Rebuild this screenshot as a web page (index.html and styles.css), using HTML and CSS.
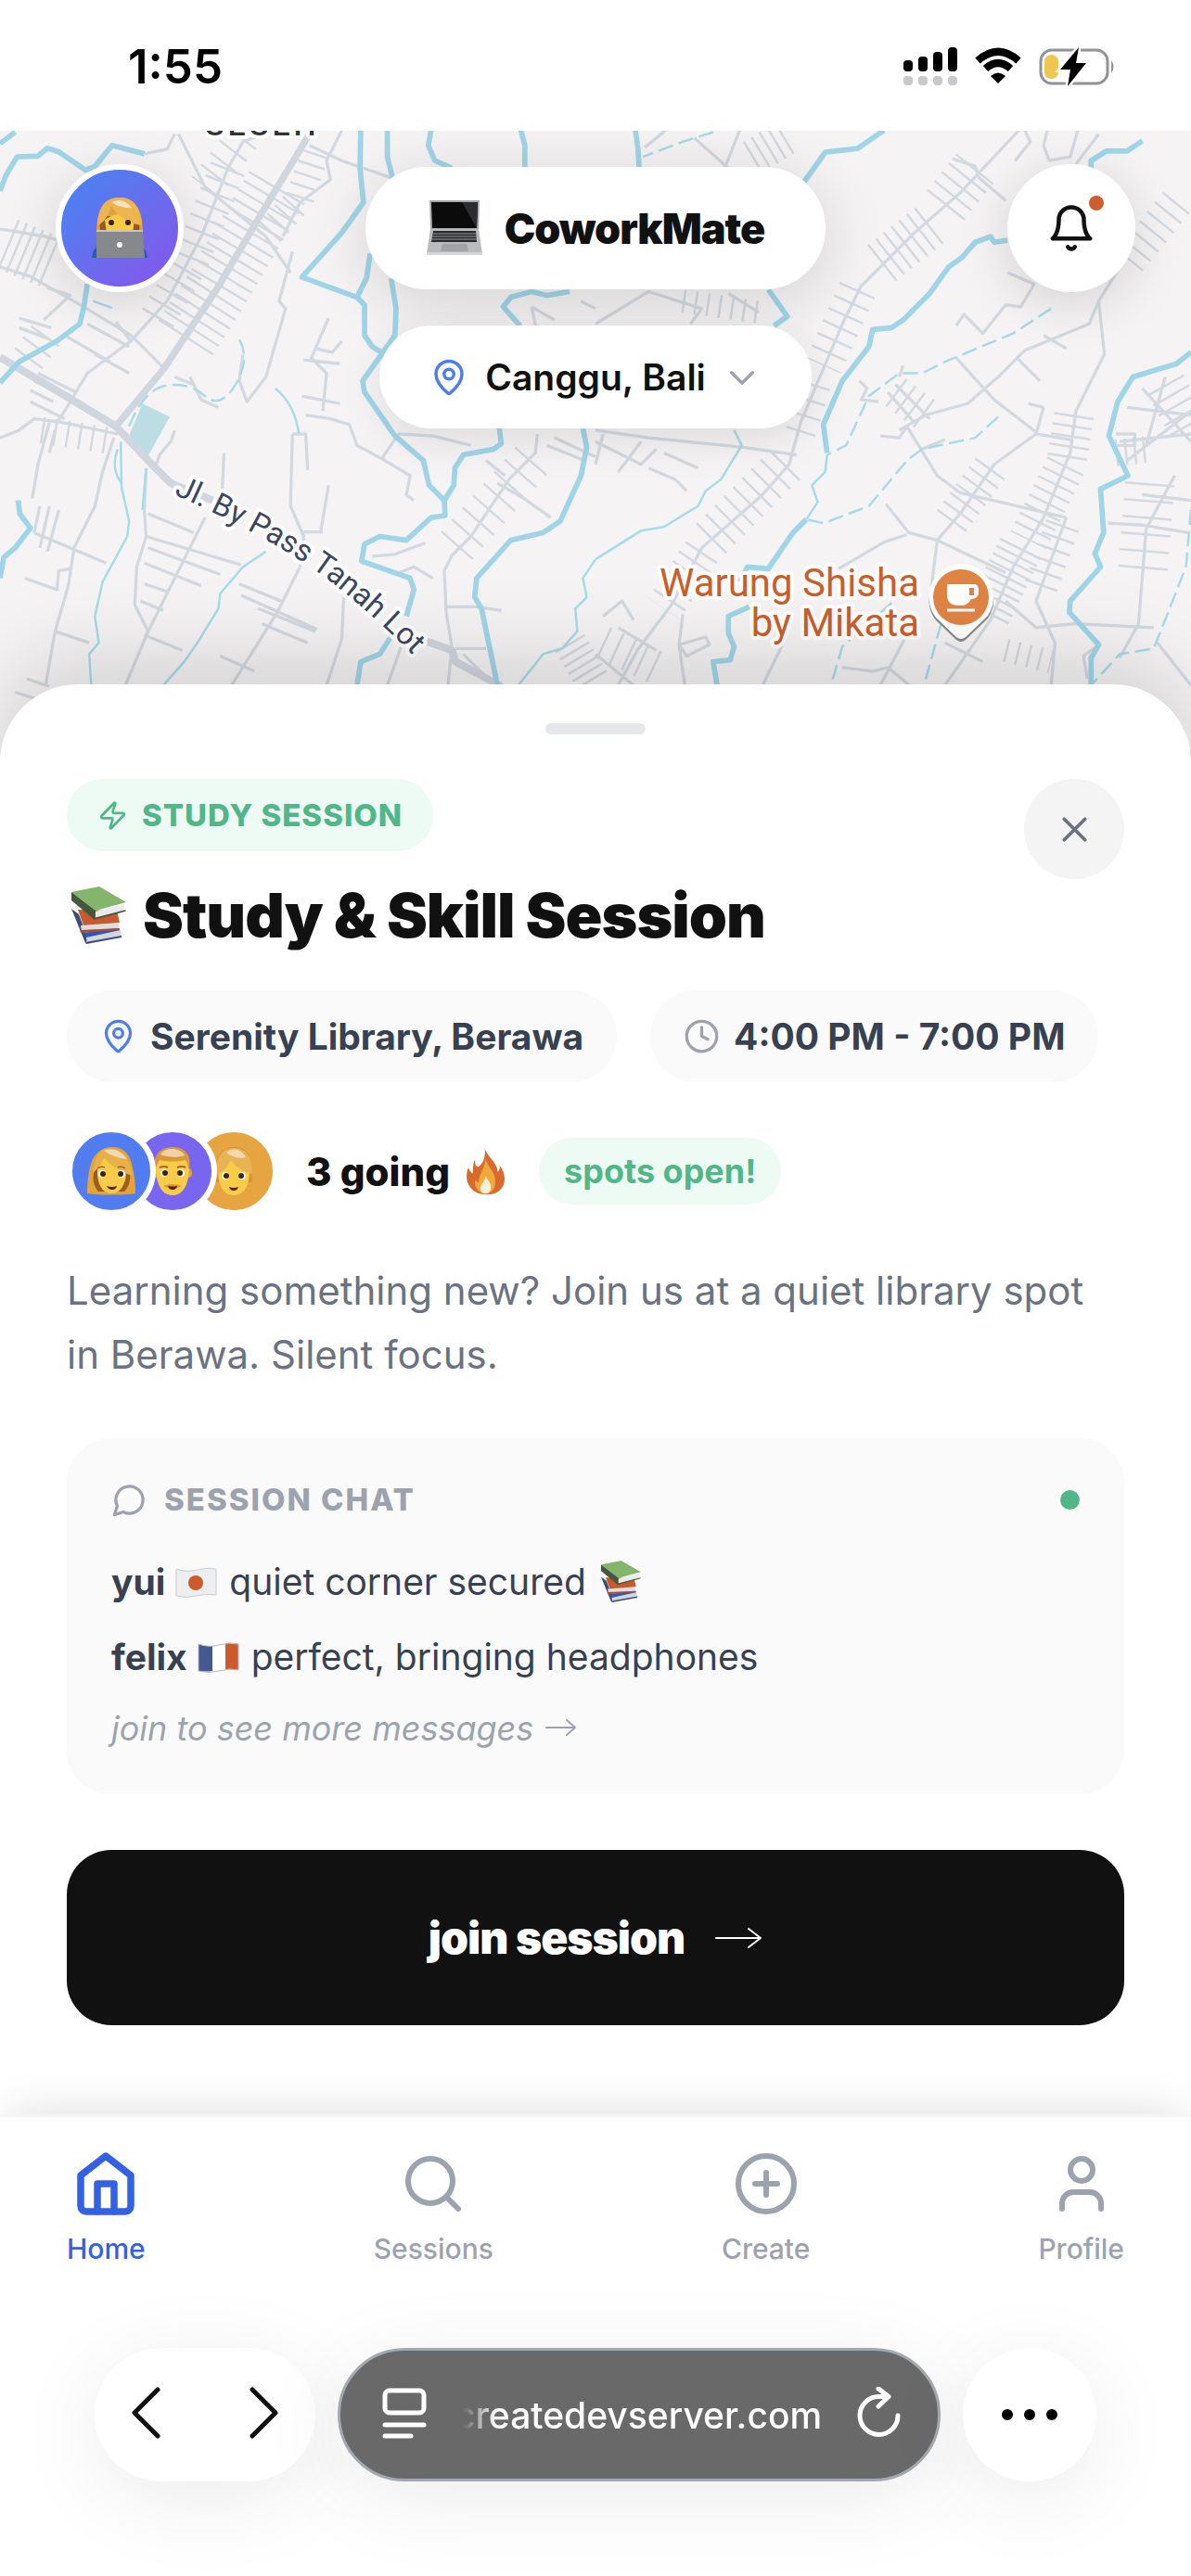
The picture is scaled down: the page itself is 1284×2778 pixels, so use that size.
FILE: index.html
```html
<!DOCTYPE html>
<html lang="en">
<head>
  <meta charset="UTF-8">
  <meta name="viewport" content="width=device-width, initial-scale=1.0">
  <title>CoworkMate</title>
  <link rel="stylesheet" href="styles.css">
</head>
<body>
  <!-- Shared pictures -->
  <svg class="defs" aria-hidden="true">
    <symbol id="pin" viewBox="0 0 24 24">
      <path d="M20 10c0 5-5.500 10.200-7.400 11.800a1 1 0 0 1-1.200 0C9.500 20.200 4 15 4 10a8 8 0 0 1 16 0"/>
      <circle cx="12" cy="10" r="3"/>
    </symbol>
    <symbol id="books" viewBox="0 0 60 62">
      <path d="M1 24l8 6 10 27-3 4z" fill="#3b5078"/>
      <path d="M14 50l36-6 4 4-35 8z" fill="#2f55c4"/>
      <path d="M17 55l37-8 1 7-37 8z" fill="#d3d6da"/>
      <path d="M16 60l39-7v2l-38 7z" fill="#3b5078"/>
      <path d="M8 25l42 1 3 13-38 6z" fill="#c75a2e"/>
      <path d="M11 42l41-3v6l-40 3z" fill="#dcdfe2"/>
      <path d="M10 47l43-2v2l-42 3z" fill="#b04d26"/>
      <path d="M1 6L31 0l29 17-33 9z" fill="#83b56a"/>
      <path d="M1 6l26 20-1 10L1 15z" fill="#44583f"/>
      <path d="M27 27l31-8v7l-31 8z" fill="#e9ebec"/>
      <path d="M25 34l35-9-1 2-34 9z" fill="#44583f"/>
    </symbol>
    <symbol id="woman" viewBox="0 0 52 52">
      <path d="M0 50C0 35 2 22 6 13 11 4 18 0 27 0c12 0 18 7 21 18 3 12 4 22 4 32-12 2-40 2-52 0z" fill="#e2a33a"/>
      <path d="M12 48C4 38 6 28 10 18h34c4 12 3 23-4 30z" fill="#9c5d20"/>
      <path d="M11 27c0-11 6-17 15-17s16 6 16 17c0 14-7 23-16 23S11 41 11 27z" fill="#f8cb48"/>
      <path d="M6 28C8 11 15 3 17 3c13-4 29 4 32 28C37 28 22 18 17 9c1 8-5 14-11 19z" fill="#e8b04a"/>
      <path d="M18 4c11-4 20 1 25 9C33 12 25 9 18 4z" fill="#f3d9b0"/>
      <circle cx="16" cy="29" r="4" fill="#fff"/><circle cx="37" cy="29" r="4" fill="#fff"/>
      <circle cx="17" cy="29" r="3" fill="#3b2413"/><circle cx="36" cy="29" r="3" fill="#3b2413"/>
      <path d="M11 23q4-3 8-1M33 22q4-2 8 1" fill="none" stroke="#a5672a" stroke-width="1.500"/>
      <path d="M21 42q6 2 11 0-1 4-5 4t-6-4z" fill="#5c1e12"/>
    </symbol>
    <symbol id="man" viewBox="0 0 44 52">
      <ellipse cx="4" cy="28" rx="3" ry="5" fill="#e3a233"/><ellipse cx="40" cy="28" rx="3" ry="5" fill="#e3a233"/>
      <path d="M4 20C4 8 12 4 22 4s18 4 18 16c0 20-6 32-18 32S4 40 4 20z" fill="#f8cb48"/>
      <path d="M3 24C0 8 10 0 22 0c13 0 21 8 18 24-2-4-2-8-4-10-8 2-20 2-28 0-2 3-3 6-5 10z" fill="#d9983c"/>
      <path d="M9 8C14 0 30 0 35 9 27 12 16 11 9 8z" fill="#f0d3a4"/>
      <circle cx="13" cy="28" r="4" fill="#fff"/><circle cx="31" cy="28" r="4" fill="#fff"/>
      <circle cx="14" cy="28" r="3" fill="#3b2413"/><circle cx="30" cy="28" r="3" fill="#3b2413"/>
      <path d="M8 22q5-2 9 0M27 22q5-2 9 0" fill="none" stroke="#a5672a" stroke-width="2"/>
      <path d="M12 42q10-4 20 0-10 5-20 0z" fill="#d9953a"/>
      <path d="M17 42q5 1 10 0-1 4-5 4t-5-4z" fill="#5c1e12"/>
    </symbol>
    <symbol id="person" viewBox="0 0 44 52">
      <ellipse cx="5" cy="30" rx="3" ry="5" fill="#e3a233"/><ellipse cx="39" cy="30" rx="3" ry="5" fill="#e3a233"/>
      <path d="M2 38C-2 14 8 0 22 0c15 0 23 12 19 38z" fill="#d3902f"/>
      <path d="M5 26C5 14 12 8 22 8s17 6 17 18c0 17-7 26-17 26S5 43 5 26z" fill="#f8cb48"/>
      <path d="M3 30C1 12 9 1 22 1c13 0 21 9 20 28-9-2-18-7-23-15-4 8-9 13-16 16z" fill="#e8b355"/>
      <path d="M14 6C20 0 31 2 35 11 27 13 19 10 14 6z" fill="#f3d9b0"/>
      <circle cx="13" cy="31" r="4" fill="#fff"/><circle cx="31" cy="31" r="4" fill="#fff"/>
      <circle cx="14" cy="31" r="3" fill="#3b2413"/><circle cx="30" cy="31" r="3" fill="#3b2413"/>
      <path d="M17 43q5 2 10 0-1 4-5 4t-5-4z" fill="#5c1e12"/>
    </symbol>
    <symbol id="laptop" viewBox="0 0 60 60">
      <path d="M3 0h54l-1 32H4z" fill="#a7a9ab"/>
      <path d="M5 2h50l-1 28H6z" fill="#0b0b0c"/>
      <path d="M38 2h17l-1 28z" fill="#2c2d30"/>
      <path d="M4 31h52l4 27H0z" fill="#b9bbbe"/>
      <path d="M7 33h46l1 12H5z" fill="#2a2b2d"/>
      <path d="M6 36h48M6 39h48M5 42h49" stroke="#97999c"/>
      <path d="M17 47h26l2 8H15z" fill="#a1a3a7"/>
      <path d="M0 56h60v3H0z" fill="#d5d7d9"/>
    </symbol>
  </svg>

  <!-- Status bar -->
  <header class="status-bar">
    <span class="time">1:55</span>
    <div class="status-icons">
      <svg width="58" height="42" viewBox="0 0 58 42">
        <g fill="#000"><rect x="0" y="14" width="10" height="12" rx="4"/><rect x="16" y="10" width="10" height="16" rx="4"/><rect x="32" y="5" width="10" height="21" rx="4"/><rect x="48" y="0" width="10" height="26" rx="4"/></g>
        <g fill="#c8c8cd"><rect x="0" y="31" width="10" height="10" rx="4"/><rect x="16" y="31" width="10" height="10" rx="4"/><rect x="32" y="31" width="10" height="10" rx="4"/><rect x="48" y="31" width="10" height="10" rx="4"/></g>
      </svg>
      <svg width="52" height="42" viewBox="0 0 52 42">
        <path d="M4 14.500Q26-5 48 14.500M12.500 23Q26 11 39.500 23" fill="none" stroke="#000" stroke-width="8"/>
        <path d="M18 31q8-7 16 0l-8 8z"/>
      </svg>
      <svg width="84" height="42" viewBox="0 0 84 42">
        <rect x="2" y="3" width="72" height="36" rx="12" fill="#fff" stroke="#929298" stroke-width="3"/>
        <path d="M78 14q5 7 0 14z" fill="#929298"/>
        <rect x="6" y="8" width="15" height="26" rx="7" fill="#f0c652"/>
        <path d="M43 0L23 24h11l-3 18 20-25H40z" stroke="#fff" stroke-width="5" paint-order="stroke"/>
      </svg>
    </div>
  </header>

  <!-- Map -->
  <section class="map">
    <svg class="map-canvas" viewBox="0 0 1284 681" preserveAspectRatio="xMidYMin slice">
      <rect width="1284" height="681" fill="#f5f3f3"/>

      <!-- West half -->
      <g transform="translate(0 -21) scale(.4094)" fill="none" stroke-linejoin="round">
        <path d="M375 770l72 35-59 107-53-47z" fill="#bcdde4"/>
        <g class="lanes">
          <path d="M730 200L570 470 480 610" stroke-width="170" stroke-dasharray="6 21"/>
          <path d="M600 150L500 400 400 570" stroke-width="95" stroke-dasharray="6 30"/>
          <path d="M830 110L790 230 700 330" stroke-width="75" stroke-dasharray="6 24"/>
          <path d="M20 350L140 400" stroke-width="140" stroke-dasharray="6 17"/>
          <path d="M640 70L540 200" stroke-width="90" stroke-dasharray="6 34"/>
          <path d="M120 590L40 700" stroke-width="90" stroke-dasharray="6 30"/>
          <path d="M110 840L300 870" stroke-width="70" stroke-dasharray="6 27"/>
          <path d="M1400 920L1180 1170" stroke-width="110" stroke-dasharray="6 36"/>
          <path d="M1500 1400l60 100" stroke-width="90" stroke-dasharray="6 16"/>
        </g>
        <g class="street">
          <path d="M725 50L640 80 600 150 530 330 440 500 345 605 230 690 170 790 150 820"/>
          <path d="M380 112L440 100 460 60M470 60L540 200 700 330 765 425M900 50L860 130 870 180 790 240 745 330"/>
          <path d="M815 90L900 130 1030 175M770 370L735 500 752 520 700 700 650 765 630 710 640 640"/>
          <path d="M0 310L120 330 190 350M0 410L80 435 220 515 345 590 430 675M125 465l60 20-70 65"/>
          <path d="M50 545l85 25M50 570l80 30M170 590l120 70M230 560l110 60M250 640l90 50M345 605l-40-50"/>
          <path d="M100 690l100 50M90 710l110 55M80 735l60 30M80 765l90 45M0 860L50 840 90 810 165 820 310 850"/>
          <path d="M130 820L100 930 85 1020M145 840L130 900M300 860L270 950 250 1040 195 1150 180 1250 145 1370 120 1512"/>
          <path d="M105 1040L90 1110M130 1040l-25 110M155 1050l-30 110M90 1110l190 80M65 1230l85 30 5-50 30-5M145 1370l90 30"/>
          <path d="M385 940L380 1050 385 1120 360 1200 355 1300 390 1370 330 1512M540 1070L390 1370"/>
          <path d="M390 1060l120 50M385 1120l250 75M390 1150l190 70M380 1190l150 60M380 1245l60 20M370 1290l60 25M380 1380l100 40"/>
          <path d="M590 900l-5 100M770 850h35l5 95M770 850L765 1040 800 1120 790 1200 730 1320 610 1512M800 1108h50M865 985l-20 120"/>
          <path d="M630 1245l110 45M635 1275l200 90M680 1310l150 60M690 1350l120 50M580 1435l90 40M905 1280L900 1390 860 1512"/>
          <path d="M865 545L820 650 860 690 850 790M830 625l45 10 25-30M800 655l95 10M795 750l100 20M805 800L870 810 920 825 940 880 1005 915 1080 960 1070 1010 1090 1025"/>
          <path d="M1005 915l45-65 90 5 100 25M460 840l-10 30-30 35-10 30M500 700l30 60 45 20M460 700l50 20"/>
          <path d="M1415 850L1410 900 1340 970 1280 1060 1240 1120 1190 1170 1170 1210 1175 1320 1190 1410 1180 1512"/>
          <path d="M1175 1305h80l65 10M980 1172l60-5 80-30M1040 1220l50-20 50 30M1200 1415h80M1220 1430l60 60M1400 515l60 35M1400 515l10 50 30 10M1530 500l38 20"/>
          <path d="M1310 980l70 40 70 50M1280 920l50 40M1060 1400l-40 112M70 1495l60 20M40 1530l60 20M1460 860l108 50M1440 880l100 40"/>
        </g>
        <g class="road">
          <path d="M815 60L700 250 570 470 430 680 305 830" stroke-width="18"/>
          <path d="M0 648L190 760 305 830 400 930 450 980 560 1025M1120 1395l70 25 10 30 120 65" stroke-width="20"/>
        </g>
        <g class="river">
          <path d="M0 85L40 55M0 210L15 170 45 120 100 118 125 97 155 107 225 155 250 145 295 90 380 112"/>
          <path d="M230 455L220 520 210 560 150 605 50 660 0 715M48 1025L52 1060 80 1098 40 1150 10 1175 0 1230"/>
          <path d="M950 50L948 150 957 240 900 320 795 437 940 490 960 510 960 590 980 620 1005 635M975 375L965 440 940 490"/>
          <path d="M1020 50V120L1035 180M1030 440L1043 520 1040 590 1005 640 955 710 960 740 1040 855 1115 920 1130 985 1170 1025"/>
          <path d="M1135 50L1128 90 1145 130 1190 150M1372 50L1382 90V150M1500 475L1440 485 1400 475 1345 490 1325 515 1370 565"/>
          <path d="M1315 835L1320 875 1300 890 1220 905 1198 940 1195 985 1170 1025 1172 1065 1135 1070 1070 1130 1000 1120 960 1140 952 1185 1080 1230 1090 1260 1070 1330M1035 1375L1000 1430 950 1450 940 1512"/>
          <path d="M1535 835L1545 885 1530 960 1475 1080 1430 1110 1345 1130 1255 1230 1250 1280 1268 1310 1310 1512"/>
        </g>
        <g class="stream">
          <path d="M318 870L320 990 340 1080 335 1120 270 1240 250 1330 260 1400 235 1430 240 1512"/>
          <path d="M310 890q-20 50 10 90M700 1160L640 1200 580 1270 575 1310 520 1400 485 1450 430 1512M385 940l-10 110M725 730q50 40 62 118"/>
          <path d="M1568 1180L1535 1230 1545 1280 1515 1310 1520 1370 1480 1415 1430 1430 1365 1512M245 500l50 18"/>
          <path class="dashed" d="M340 830Q380 730 440 722T540 750 620 720 630 600"/>
        </g>
      </g>

      <!-- East half -->
      <g transform="translate(642 -21) scale(.4094)" fill="none" stroke-linejoin="round">
        <g class="lanes">
          <path d="M1000 150L920 250" stroke-width="125" stroke-dasharray="6 24"/>
          <path d="M880 300L740 410" stroke-width="120" stroke-dasharray="6 20"/>
          <path d="M690 470L600 670" stroke-width="100" stroke-dasharray="6 30"/>
          <path d="M580 720L530 880" stroke-width="80" stroke-dasharray="6 36"/>
          <path d="M500 930L300 1130" stroke-width="110" stroke-dasharray="6 28"/>
          <path d="M280 1160L180 1310" stroke-width="100" stroke-dasharray="6 24"/>
          <path d="M1260 800L1240 930 1140 1130" stroke-width="105" stroke-dasharray="6 21"/>
          <path d="M1120 1150L1030 1330" stroke-width="120" stroke-dasharray="6 15"/>
          <path d="M1040 940L930 1090" stroke-width="95" stroke-dasharray="6 22"/>
          <path d="M1230 1090L1170 1260" stroke-width="90" stroke-dasharray="6 27"/>
          <path d="M1460 980L1440 1230" stroke-width="130" stroke-dasharray="6 38"/>
          <path d="M500 70L400 130" stroke-width="95" stroke-dasharray="6 18"/>
          <path d="M230 500L430 530" stroke-width="60" stroke-dasharray="6 26"/>
          <path d="M1530 240L1400 400" stroke-width="90" stroke-dasharray="6 26"/>
          <path d="M1500 720l68 120" stroke-width="110" stroke-dasharray="6 24"/>
          <path d="M1370 900l90-10" stroke-width="70" stroke-dasharray="6 18"/>
          <path d="M790 740l80 60" stroke-width="90" stroke-dasharray="6 24"/>
          <path d="M20 1400l150 70" stroke-width="90" stroke-dasharray="6 30"/>
          <path d="M1080 1420l120 30" stroke-width="60" stroke-dasharray="6 24"/>
        </g>
        <g class="street">
          <path d="M1115 50L960 215 840 320 700 460 650 560 540 820 510 930 440 1010 280 1150 200 1300 110 1420 60 1512"/>
          <path d="M940 125l60 20 10 30 70 60M1130 50l15 30-40 50M1190 50l-10 40 15 40 55-10 20-70M1325 60l-60 80"/>
          <path d="M380 50L340 150M260 70l90 80M185 50l-55 45M0 560L140 475 280 520 250 560M350 480l80 50"/>
          <path d="M1085 425l70 30-35 60-40-5-60 75-50-50-20 30M1400 380L1325 500 1300 560 1130 630 1060 700 980 770 870 800 800 840M750 855l50 5 20-30L900 960 960 1005 1240 1070"/>
          <path d="M1325 500L1340 640 1265 790 1250 900 1180 1070 1100 1200 1040 1340 920 1512M950 650l100 110 110 85"/>
          <path d="M1180 780L1160 850 1050 930 960 1060 900 1130 885 1250M1180 780l-40-10M1160 850l90 15M695 710l20 20-15 30 45 5"/>
          <path d="M770 740l70 80M790 720l90 90M810 670l-10 30M1180 590l60 35M1110 650l60 60M860 890l60-25"/>
          <path d="M765 1035l60 75 75 20 180 85M820 1115l-60 20-120 70M1240 1070L1160 1290 1210 1400 1200 1512M1080 1290l80 70 100-10 210 10"/>
          <path d="M1380 870L1568 850M1400 920l168-130M1440 730l128 140M1400 780l168 20M1500 700l-50 180M1370 850h50v30h-50"/>
          <path d="M1525 960L1450 1100 1430 1350 1380 1440M1350 1085l90 5 120 20M1440 1010l128 15M1325 1405l-40 30 10 60M1480 1400l88 112"/>
          <path d="M0 840l140 20 250 25 140 20M0 870l120 60 40-40M140 940l70 30 30 30M180 900l90 40M20 850l-20 80M60 950l60-80"/>
          <path d="M220 1405l70-20 10 20-60 30-20-30 10-80M220 1405L235 1512M650 1465l80 10 40-10 60 50M500 1390L440 1512M840 1340L750 1512"/>
          <path d="M20 1330l50-40 30 50M0 1430l100 82M60 1360l100 60M920 1400l100 50"/>
        </g>
        <g class="river">
          <path d="M105 50L112 100 115 150M760 50L690 98 605 108 550 185M455 470L505 540 470 565"/>
          <path d="M1085 340L1050 345 1040 330 1000 345 965 385 930 410 880 480 810 550 780 570 730 575 720 620 650 710 600 825 610 900"/>
          <path d="M1440 78L1400 105 1345 105 1305 130V160"/>
          <path d="M1568 635L1530 665 1415 700 1375 765 1352 855 1402 960 1330 995 1338 1110 1315 1165 1330 1200 1250 1290 1248 1320 1325 1405 1305 1440V1512"/>
          <path d="M555 1075L520 1110 455 1205 400 1200 380 1240M405 1305L350 1330V1375L365 1410 355 1445 310 1450 320 1512"/>
        </g>
        <g class="stream">
          <path d="M365 840L385 880 330 970 290 1000 270 1040 180 1095 120 1105 80 1130 0 1180M610 905L605 950 570 985 585 1030 555 1075"/>
          <path class="dashed" d="M1200 520L1100 585 920 660 860 690 800 690 720 750 660 880 610 905M310 55L230 80 125 120"/>
          <path class="dashed" d="M1060 805L1000 860 860 890 820 920 720 1040 600 1085 555 1075"/>
          <path class="dashed" d="M1568 1050L1555 1200 1500 1340 1470 1415 1380 1430 1305 1512M910 1350L865 1512M780 1295L650 1410 620 1512"/>
        </g>
      </g>

      <path id="bypass" d="M187 392Q300 442 360 489T490 612" fill="none"/>
      <text class="map-label area" x="221" y="5">SESEH</text>
      <text class="map-label road-name"><textPath href="#bypass">Jl. By Pass Tanah Lot</textPath></text>
      <text class="map-label place" x="991" y="502" text-anchor="end">Warung Shisha</text>
      <text class="map-label place" x="991" y="545" text-anchor="end">by Mikata</text>
      <path d="M1036 470a36 36 0 0 1 29 56l-24 23q-5 4-10 0l-22-21a36 36 0 0 1 27-58z" fill="#8a8a8a"/>
      <path d="M1036 467a36 36 0 0 1 29 56l-24 23q-5 4-10 0l-22-21a36 36 0 0 1 27-58z" fill="#fff"/>
      <circle cx="1036" cy="503" r="30" fill="#e08443"/>
      <path d="M1021 489h30q4 0 4 8t-8 8q-4 8-13 7-13 0-13-11zM1045 493v8h5v-8z" fill="#fff" fill-rule="evenodd"/>
      <path d="M1021 517h30" stroke="#fff" stroke-width="3"/>
    </svg>

    <div class="map-controls">
      <div class="top-row">
        <button class="round-btn avatar-btn" aria-label="My profile">
          <svg width="60" height="66" viewBox="0 0 60 66">
            <path d="M0 65q1-11 8-13h44q7 2 8 13z" fill="#2c57b5"/>
            <path d="M5 46C4 18 10 0 30 0s26 18 25 46z" fill="#e0a03a"/>
            <path d="M9 36q-2-10 4-16h34q6 8 4 16z" fill="#935a24"/>
            <path d="M14 24q16-12 32 0l-2 14H16z" fill="#fbcb45"/>
            <path d="M6 30C7 8 16 0 30 0s23 10 24 30C40 28 26 20 21 8 18 20 13 27 6 30z" fill="#edb450"/>
            <path d="M21 5q13-6 22 6-12 1-22-6z" fill="#f6e0bd"/>
            <circle cx="21" cy="27" r="3" fill="#3b2413"/><circle cx="39" cy="27" r="3" fill="#3b2413"/>
            <path d="M5 36h50l2 29H5z" fill="#85888c"/><path d="M5 35h50v2H5z" fill="#c3c5c8"/>
            <circle cx="30" cy="51" r="3" fill="#fff"/>
          </svg>
        </button>
        <h1 class="brand">
          <svg width="60" height="60"><use href="#laptop"/></svg>
          CoworkMate
        </h1>
        <button class="round-btn" aria-label="Notifications">
          <svg class="icon" width="54" height="54" viewBox="0 0 24 24">
            <path d="M6 8a6 6 0 0 1 12 0c0 7 3 9 3 9H3s3-2 3-9"/>
            <path d="M10.300 21a1.940 1.940 0 0 0 3.400 0"/>
          </svg>
          <span class="alert-dot"></span>
        </button>
      </div>
      <button class="location">
        <svg class="icon blue" width="42" height="42"><use href="#pin"/></svg>
        Canggu, Bali
        <svg class="icon gray" width="42" height="42" viewBox="0 0 24 24"><path d="M5.500 9l6.500 6.500L18.500 9"/></svg>
      </button>
    </div>
  </section>

  <!-- Session sheet -->
  <main class="sheet">
    <div class="handle"></div>
    <div class="sheet-head">
      <div>
        <span class="badge">
          <svg class="icon" width="33" height="33" viewBox="0 0 24 24"><path d="M4 14a1 1 0 0 1-.8-1.600l9.900-10.200a.5.5 0 0 1 .9.460l-1.900 6A1 1 0 0 0 13 10h7a1 1 0 0 1 .8 1.600l-9.900 10.200a.5.5 0 0 1-.9-.460l1.900-6A1 1 0 0 0 11 14z"/></svg>
          STUDY SESSION
        </span>
        <h2><svg width="60" height="62"><use href="#books"/></svg>Study &amp; Skill Session</h2>
      </div>
      <button class="close" aria-label="Close">
        <svg class="icon" width="45" height="45" viewBox="0 0 24 24"><path d="M18 6L6 18M6 6l12 12"/></svg>
      </button>
    </div>

    <div class="chips">
      <span class="chip">
        <svg class="icon blue" width="39" height="39"><use href="#pin"/></svg>
        Serenity Library, Berawa
      </span>
      <span class="chip">
        <svg class="icon gray" width="39" height="39" viewBox="0 0 24 24"><circle cx="12" cy="12" r="10"/><path d="M12 6v6l4 2"/></svg>
        4:00 PM - 7:00 PM
      </span>
    </div>

    <div class="going">
      <div class="faces">
        <span class="face face-blue"><svg width="52" height="52"><use href="#woman"/></svg></span>
        <span class="face face-purple"><svg width="44" height="52"><use href="#man"/></svg></span>
        <span class="face face-orange"><svg width="44" height="52"><use href="#person"/></svg></span>
      </div>
      <strong>3 going</strong>
      <svg class="fire" width="42" height="54" viewBox="0 0 45 54">
        <path d="M21 0c2 10 15 17 15 28 2-2 3-5 2-8 11 14 7 34-15 34C4 54-4 38 2 23c2 5 4 6 5 7 1-8 0-12 3-17-1 9 3 10 5 8 5-5 7-11 6-21z" fill="#d96a2d"/>
        <path d="M22 12c1 9 11 15 11 25 1 10-4 16-11 16S8 46 10 37c1 2 3 3 4 3 0-10 8-17 8-28z" fill="#efa93b"/>
        <path d="M22 33c4 6 7 9 6 14-1 4-3 6-6 6s-6-2-6-6c0-5 5-8 6-14z" fill="#fbf0d8"/>
      </svg>
      <span class="spots">spots open!</span>
    </div>

    <p class="about">Learning something new? Join us at a quiet library spot in Berawa. Silent focus.</p>

    <section class="chat">
      <div class="chat-head">
        <svg class="icon" width="39" height="39" viewBox="0 0 24 24"><path d="M7.900 20A9 9 0 1 0 4 16.100L2 22z"/></svg>
        <h3>SESSION CHAT</h3>
        <span class="online"></span>
      </div>
      <p><b>yui</b>
        <svg class="flag" width="45" height="33" viewBox="0 0 45 33"><path d="M1 2q11 4 22 1t21-1v28q-10-2-21 1t-22 0z" fill="#eceef0" stroke="#c9ccd0"/><circle cx="22" cy="17" r="8" fill="#cb5a2c"/></svg>
        quiet corner secured
        <svg class="tall" width="44" height="45"><use href="#books"/></svg>
      </p>
      <p><b>felix</b>
        <svg class="flag" width="45" height="33" viewBox="0 0 45 33"><path d="M1 2q7 3 15 2v27q-8 1-15 0z" fill="#43598f"/><path d="M16 4q8-2 14-3v28q-7 0-14 2z" fill="#fff"/><path d="M30 1q7-1 14 1v28q-7-2-14-1z" fill="#cb5a2c"/><path d="M1 2q11 4 22 1t21-1v28q-10-2-21 1t-22 0z" fill="none" stroke="#b5b8bd"/></svg>
        perfect, bringing headphones
      </p>
      <p class="more">join to see more messages
        <svg class="icon" width="33" height="18" viewBox="0 0 33 18"><path d="M1 9h31M23 1l9 8-9 8"/></svg>
      </p>
    </section>

    <button class="join">
      join session
      <svg class="icon" width="51" height="24" viewBox="0 0 51 24"><path d="M1 12h48M36 2l13 10-13 10"/></svg>
    </button>
  </main>

  <!-- Tabs -->
  <nav class="tabs">
    <a href="#" class="active">
      <svg class="icon" width="72" height="72" viewBox="0 0 24 24"><path d="M3 9l9-7 9 7v11a2 2 0 0 1-2 2H5a2 2 0 0 1-2-2z"/><path d="M9 22V12h6v10"/></svg>
      Home
    </a>
    <a href="#">
      <svg class="icon" width="72" height="72" viewBox="0 0 24 24"><circle cx="11" cy="11" r="8"/><path d="M21 21l-4.300-4.300"/></svg>
      Sessions
    </a>
    <a href="#">
      <svg class="icon" width="72" height="72" viewBox="0 0 24 24"><circle cx="12" cy="12" r="10"/><path d="M8 12h8M12 8v8"/></svg>
      Create
    </a>
    <a href="#">
      <svg class="icon" width="72" height="72" viewBox="0 0 24 24"><path d="M19 21v-2a4 4 0 0 0-4-4H9a4 4 0 0 0-4 4v2"/><circle cx="12" cy="7" r="4"/></svg>
      Profile
    </a>
  </nav>

  <!-- Browser toolbar -->
  <footer class="browser">
    <div class="history">
      <button aria-label="Back"><svg class="icon" width="32" height="56" viewBox="0 0 32 56"><path d="M29 3L4 28l25 25"/></svg></button>
      <button aria-label="Forward"><svg class="icon" width="32" height="56" viewBox="0 0 32 56"><path d="M3 3l25 25L3 53"/></svg></button>
    </div>
    <div class="address">
      <button aria-label="Page menu"><svg class="icon" width="48" height="56" viewBox="0 0 48 56"><rect x="3" y="4" width="42" height="24" rx="5"/><path d="M3 41h42M3 53h28"/></svg></button>
      <input type="text" aria-label="Address" value="createdevserver.com">
      <button aria-label="Reload"><svg class="icon" width="48" height="56" viewBox="0 0 48 56"><path d="M44 31a20.500 20.500 0 1 1-20-20.500h10M23 2l11 8.500L23 21"/></svg></button>
    </div>
    <button class="dots" aria-label="More"><svg width="60" height="12" viewBox="0 0 60 12"><circle cx="6" cy="6" r="6"/><circle cx="30" cy="6" r="6"/><circle cx="54" cy="6" r="6"/></svg></button>
  </footer>
</body>
</html>
```
FILE: styles.css
```css
* {
  box-sizing: border-box;
}
body {
  margin: 0;
  min-height: 100vh;
  display: flex;
  flex-direction: column;
  background-color: #fff;
  color: #111;
  font-family: Inter, "Liberation Sans", sans-serif;
}
h1, h2, h3, p {
  margin: 0;
}
button {
  padding: 0;
  border: none;
  background: none;
  color: inherit;
  font: inherit;
  cursor: pointer;
}
svg {
  flex-shrink: 0;
}
.defs {
  position: absolute;
  width: 0;
  height: 0;
}
.icon {
  fill: none;
  stroke: currentColor;
  stroke-width: 2;
  stroke-linecap: round;
  stroke-linejoin: round;
}
.blue {
  color: #4f7df0;
}
.gray {
  color: #9ca3af;
}

/* Status bar */
.status-bar {
  display: flex;
  align-items: center;
  justify-content: space-between;
  padding: 48px 80px 45px 138px;
  color: #000;
}
.time {
  font-size: 51px;
  line-height: 48px;
  font-weight: 600;
}
.status-icons {
  display: flex;
  align-items: center;
  gap: 18px;
}

/* Map */
.map {
  position: relative;
  height: 681px;
  overflow: hidden;
  background-color: #f5f3f3;
}
.map-canvas {
  position: absolute;
  inset: 0;
  width: 100%;
  height: 100%;
}
.street path {
  stroke: #d3d9e0;
  stroke-width: 8;
}
.lanes path {
  stroke: #d3d9e0;
}
.road path {
  stroke: #d0d6de;
}
.river path {
  stroke: #a0d5e8;
  stroke-width: 14;
}
.stream path {
  stroke: #a6dbe8;
  stroke-width: 6;
}
.stream .dashed {
  stroke-dasharray: 40 16;
}
.map-label {
  font-family: Roboto, sans-serif;
  stroke: #fff;
  stroke-width: 8px;
  stroke-linejoin: round;
  paint-order: stroke;
}
.area {
  font-size: 34px;
  font-weight: 500;
  letter-spacing: 4px;
  fill: #333;
}
.road-name {
  font-size: 33px;
  fill: #3c4660;
}
.place {
  font-size: 42px;
  fill: #c9602c;
}
.map-controls {
  position: relative;
  display: flex;
  flex-direction: column;
  align-items: center;
  gap: 36px;
  padding: 36px 60px;
}
.top-row {
  width: 100%;
  display: flex;
  align-items: center;
  justify-content: space-between;
}
.round-btn {
  position: relative;
  display: flex;
  align-items: center;
  justify-content: center;
  width: 138px;
  height: 138px;
  border-radius: 50%;
  background-color: #fff;
  box-shadow: 0 12px 60px rgba(0, 0, 0, 0.14);
}
.avatar-btn {
  border: 6px solid #fff;
  background: linear-gradient(135deg, #527df0 20%, #7c5eec 80%);
}
.alert-dot {
  position: absolute;
  top: 34px;
  right: 34px;
  width: 16px;
  height: 16px;
  border-radius: 50%;
  background-color: #cb5f2f;
}
.brand {
  display: flex;
  align-items: center;
  gap: 24px;
  height: 132px;
  padding: 0 66px;
  border-radius: 66px;
  background-color: #fff;
  font-size: 45px;
  font-weight: 900;
  letter-spacing: -1px;
  box-shadow: 0 12px 72px rgba(0, 0, 0, 0.14);
}
.location {
  display: flex;
  align-items: center;
  gap: 18px;
  height: 111px;
  padding: 0 54px;
  border-radius: 56px;
  background-color: #fff;
  font-size: 39px;
  font-weight: 600;
  box-shadow: 0 12px 48px rgba(0, 0, 0, 0.1);
}

/* Session sheet */
.sheet {
  position: relative;
  margin-top: -84px;
  padding: 42px 72px 96px;
  border-radius: 84px 84px 0 0;
  background-color: #fff;
  box-shadow: 0 -24px 96px rgba(0, 0, 0, 0.15);
}
.handle {
  width: 108px;
  height: 12px;
  margin: 0 auto 48px;
  border-radius: 6px;
  background-color: #e5e7eb;
}
.sheet-head {
  display: flex;
  align-items: flex-start;
  justify-content: space-between;
}
.badge {
  display: inline-flex;
  align-items: center;
  gap: 15px;
  height: 78px;
  padding: 0 33px;
  border-radius: 39px;
  background-color: #edfbf4;
  color: #52b788;
  font-size: 33px;
  font-weight: 800;
  letter-spacing: 1px;
}
h2 {
  display: flex;
  align-items: center;
  gap: 18px;
  margin-top: 30px;
  padding-left: 4px;
  font-size: 66px;
  line-height: 78px;
  font-weight: 900;
  letter-spacing: -1px;
}
.close {
  display: flex;
  align-items: center;
  justify-content: center;
  width: 108px;
  height: 108px;
  border-radius: 50%;
  background-color: #f4f4f4;
  color: #6b7280;
}
.chips {
  display: flex;
  gap: 36px;
  margin-top: 42px;
}
.chip {
  display: flex;
  align-items: center;
  gap: 15px;
  height: 99px;
  padding: 0 36px;
  border-radius: 50px;
  background-color: #fafafa;
  color: #374151;
  font-size: 39px;
  font-weight: 700;
}
.going {
  display: flex;
  align-items: center;
  margin-top: 48px;
}
.faces {
  display: flex;
  margin-right: 30px;
}
.face {
  position: relative;
  display: flex;
  align-items: center;
  justify-content: center;
  width: 96px;
  height: 96px;
  border: 6px solid #fff;
  border-radius: 50%;
}
.face + .face {
  margin-left: -30px;
}
.face-blue {
  z-index: 3;
  background-color: #527df0;
}
.face-purple {
  z-index: 2;
  background-color: #7866ef;
}
.face-orange {
  z-index: 1;
  background-color: #e6a540;
}
.going strong {
  font-size: 42px;
  font-weight: 800;
}
.fire {
  margin: 0 36px 0 18px;
}
.spots {
  padding: 0 27px;
  border-radius: 36px;
  background-color: #edfbf4;
  color: #52b788;
  font-size: 36px;
  line-height: 72px;
  font-weight: 700;
}
.about {
  margin-top: 46px;
  color: #6b7280;
  font-size: 42px;
  line-height: 69px;
}

/* Chat preview */
.chat {
  display: flex;
  flex-direction: column;
  gap: 18px;
  margin: 56px 0 60px;
  padding: 45px 48px 42px;
  border-radius: 48px;
  background-color: #fafafa;
  color: #374151;
  font-size: 39px;
  line-height: 63px;
}
.chat-head {
  display: flex;
  align-items: center;
  gap: 18px;
  height: 42px;
  margin-bottom: 18px;
  color: #9ca3af;
}
.chat-head h3 {
  font-size: 33px;
  font-weight: 800;
  letter-spacing: 2px;
}
.online {
  width: 21px;
  height: 21px;
  margin-left: auto;
  border-radius: 50%;
  background-color: #52b788;
}
.chat .flag {
  margin-right: 2px;
  vertical-align: -3px;
}
.chat .tall {
  margin-left: 4px;
  vertical-align: -8px;
}
.chat .more {
  color: #9ca3af;
  font-size: 36px;
  line-height: 57px;
  font-style: italic;
}
.more svg {
  margin-left: 3px;
  vertical-align: 5px;
}
.join {
  display: flex;
  align-items: center;
  justify-content: center;
  gap: 33px;
  width: 100%;
  height: 189px;
  border-radius: 48px;
  background-color: #111;
  color: #fff;
  font-size: 48px;
  font-weight: 900;
  letter-spacing: -1px;
}

/* Tabs */
.tabs {
  position: relative;
  display: flex;
  justify-content: space-between;
  padding: 36px 72px 0;
  border-top: 3px solid #f5f5f5;
  background-color: #fff;
  box-shadow: 0 -12px 48px -12px rgba(0, 0, 0, 0.15);
}
.tabs a {
  display: flex;
  flex-direction: column;
  align-items: center;
  gap: 12px;
  color: #9ca3af;
  font-size: 30px;
  line-height: 45px;
  font-weight: 500;
  text-decoration: none;
}
.tabs .active {
  color: #3461e2;
}
.tabs .active svg {
  stroke-width: 2.5;
}

/* Browser toolbar */
.browser {
  position: relative;
  flex: 1;
  display: flex;
  align-items: flex-start;
  gap: 24px;
  padding: 84px 102px 100px;
  background-color: #fff;
}
.history, .address, .dots {
  display: flex;
  align-items: center;
  height: 144px;
  border-radius: 72px;
  background-color: #fff;
  box-shadow: 0 18px 96px rgba(0, 0, 0, 0.08);
}
.history {
  gap: 96px;
  padding: 0 39px;
}
.history .icon {
  stroke-width: 5;
}
.address {
  flex: 1;
  min-width: 0;
  gap: 39px;
  padding: 0 39px 0 45px;
  border: 3px solid #a3a9b0;
  background-color: #696969;
  color: #fff;
}
.address .icon {
  stroke-width: 5;
}
.address input {
  flex: 1;
  min-width: 0;
  padding: 0;
  border: none;
  outline: none;
  background: none;
  color: inherit;
  font: inherit;
  font-size: 39px;
  font-weight: 500;
  text-indent: -9px;
  -webkit-mask-image: linear-gradient(to right, transparent, #000 36px);
  mask-image: linear-gradient(to right, transparent, #000 36px);
}
.dots {
  justify-content: center;
  width: 144px;
}
```
